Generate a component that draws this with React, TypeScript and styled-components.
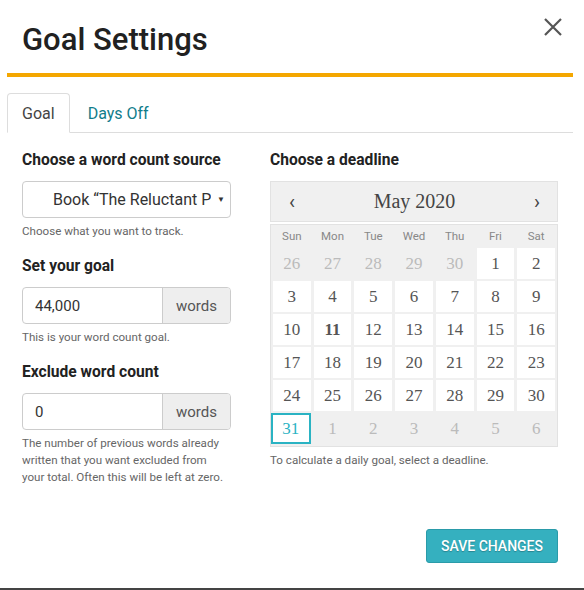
import React from "react";
import styled, { createGlobalStyle, css } from "styled-components";

const GlobalStyle = createGlobalStyle`
  * { box-sizing: border-box; }
  html, body { margin: 0; padding: 0; background: #fff; }
  body { font-family: Roboto, "Liberation Sans", Arial, sans-serif; color: #222; }
`;

const Modal = styled.div`
  width: 584px;
  height: 590px;
  padding: 0 11px 0 7px;
  border-bottom: 2px solid #444;
  display: flex;
  flex-direction: column;
`;

const Header = styled.div`
  height: 77px;
  padding: 0 0 0 15px;
  display: flex;
  align-items: flex-start;
  justify-content: space-between;
  border-bottom: 4px solid #f4a700;
`;

const Title = styled.h1`
  margin: 22px 0 0;
  font-size: 31px;
  font-weight: 500;
  line-height: 36px;
  color: #212121;
`;

const Close = styled.button`
  margin: 13px 6px 0 0;
  width: 28px;
  height: 28px;
  padding: 0;
  border: 0;
  background: none;
  cursor: pointer;
  display: flex;
  align-items: center;
  justify-content: center;
`;

const Tabs = styled.div`
  margin-top: 16px;
  display: flex;
  border-bottom: 1px solid #ddd;
`;

const Tab = styled.div<{ $active?: boolean }>`
  height: 40px;
  padding: 0 14px;
  display: flex;
  align-items: center;
  font-size: 16px;
  margin-bottom: -1px;
  border: 1px solid transparent;
  border-radius: 4px 4px 0 0;
  ${({ $active }) =>
    $active
      ? css`
          color: #444;
          border-color: #ddd;
          border-bottom-color: #fff;
          background: #fff;
        `
      : css`
          color: #117d8b;
          padding: 0 18px 0 17px;
        `}
`;

const Pane = styled.div`
  flex: 1;
  padding: 18px 15px 0;
  display: flex;
  flex-direction: column;
`;

const Columns = styled.div`
  display: flex;
  gap: 39px;
`;

const LeftCol = styled.div`
  width: 209px;
  display: flex;
  flex-direction: column;
`;

const RightCol = styled.div`
  width: 288px;
  display: flex;
  flex-direction: column;
`;

const Label = styled.div<{ $top?: number }>`
  font-size: 15.6px;
  font-weight: 700;
  line-height: 18px;
  color: #222;
  margin-top: ${({ $top }) => $top ?? 0}px;
  margin-bottom: 12px;
`;

const SelectBox = styled.div`
  height: 37px;
  border: 1px solid #ccc;
  border-radius: 4px;
  display: flex;
  align-items: center;
  padding: 0 5px 0 30px;
  font-size: 16px;
  color: #333;
`;

const SelectText = styled.span`
  flex: 1;
  white-space: nowrap;
  overflow: hidden;
`;

const Caret = styled.span`
  font-size: 8px;
  color: #333;
  margin-left: 6px;
`;

const Help = styled.div`
  margin-top: 5px;
  font-size: 11.6px;
  line-height: 17px;
  color: #666;
`;

const InputGroup = styled.div`
  height: 37px;
  display: flex;
  border: 1px solid #ccc;
  border-radius: 4px;
  overflow: hidden;
`;

const Input = styled.div`
  flex: 1;
  display: flex;
  align-items: center;
  padding: 0 12px;
  font-size: 15px;
  color: #333;
`;

const Addon = styled.div`
  width: 68px;
  display: flex;
  align-items: center;
  justify-content: center;
  background: #eee;
  border-left: 1px solid #ccc;
  font-size: 15px;
  color: #555;
`;

const Calendar = styled.div`
  display: flex;
  flex-direction: column;
  gap: 2px;
  font-family: "Liberation Serif", "Times New Roman", serif;
`;

const CalHeader = styled.div`
  height: 41px;
  border: 1px solid #e2e2e2;
  background: #f0f0f0;
  display: flex;
  align-items: center;
  justify-content: space-between;
  padding: 0 17px 0 18px;
`;

const Month = styled.div`
  font-size: 20px;
  color: #444;
`;

const Arrow = styled.span`
  font-family: Roboto, "Liberation Sans", sans-serif;
  font-size: 20px;
  font-weight: 400;
  color: #444;
  line-height: 1;
`;

const CalBody = styled.div`
  border: 1px solid #e2e2e2;
  background: #f0f0f0;
  padding: 0 2px 2px;
`;

const Grid = styled.div`
  display: grid;
  grid-template-columns: repeat(7, 1fr);
  column-gap: 3px;
  row-gap: 2px;
`;

const Weekday = styled.div`
  height: 21px;
  display: flex;
  align-items: center;
  justify-content: center;
  font-family: Roboto, "Liberation Sans", sans-serif;
  font-size: 11.5px;
  color: #888;
`;

const Day = styled.div<{ $muted?: boolean; $today?: boolean; $selected?: boolean }>`
  height: 31px;
  display: flex;
  align-items: center;
  justify-content: center;
  font-size: 17px;
  color: #555;
  background: #fff;
  ${({ $muted }) =>
    $muted &&
    css`
      background: transparent;
      color: #bbb;
    `}
  ${({ $today }) =>
    $today &&
    css`
      font-weight: 700;
    `}
  ${({ $selected }) =>
    $selected &&
    css`
      margin-left: -2px;
      color: #2ab3c3;
      border: 2px solid #2ab3c3;
      background: #fff;
    `}
`;

const Footer = styled.div`
  margin-top: auto;
  margin-bottom: 25px;
  display: flex;
  justify-content: flex-end;
`;

const SaveButton = styled.button`
  height: 34px;
  padding: 0 14px;
  border: 1px solid #2a9ba9;
  border-radius: 3px;
  background: #35b0bf;
  color: #fff;
  font-family: Roboto, "Liberation Sans", sans-serif;
  font-size: 14px;
  font-weight: 500;
  text-shadow: 0 1px 1px rgba(0, 0, 0, 0.25);
  cursor: pointer;
`;

const weekdays = ["Sun", "Mon", "Tue", "Wed", "Thu", "Fri", "Sat"];

type Cell = { n: number; muted?: boolean; today?: boolean; selected?: boolean };

const cells: Cell[] = [
  ...[26, 27, 28, 29, 30].map((n) => ({ n, muted: true })),
  ...Array.from({ length: 31 }, (_, i) => ({
    n: i + 1,
    today: i + 1 === 11,
    selected: i + 1 === 31,
  })),
  ...[1, 2, 3, 4, 5, 6].map((n) => ({ n, muted: true })),
];

export default function App() {
  return (
    <>
      <GlobalStyle />
      <Modal>
        <Header>
          <Title>Goal Settings</Title>
          <Close aria-label="Close">
            <svg width="20" height="20" viewBox="0 0 20 20">
              <path d="M2 2 L18 18 M18 2 L2 18" stroke="#555" strokeWidth="2.2" />
            </svg>
          </Close>
        </Header>

        <Tabs>
          <Tab $active>Goal</Tab>
          <Tab>Days Off</Tab>
        </Tabs>

        <Pane>
          <Columns>
            <LeftCol>
              <Label>Choose a word count source</Label>
              <SelectBox>
                <SelectText>Book “The Reluctant P</SelectText>
                <Caret>▼</Caret>
              </SelectBox>
              <Help>Choose what you want to track.</Help>

              <Label $top={17}>Set your goal</Label>
              <InputGroup>
                <Input>44,000</Input>
                <Addon>words</Addon>
              </InputGroup>
              <Help>This is your word count goal.</Help>

              <Label $top={17}>Exclude word count</Label>
              <InputGroup>
                <Input>0</Input>
                <Addon>words</Addon>
              </InputGroup>
              <Help>
                The number of previous words already written that you want
                excluded from your total. Often this will be left at zero.
              </Help>
            </LeftCol>

            <RightCol>
              <Label>Choose a deadline</Label>
              <Calendar>
                <CalHeader>
                  <Arrow>‹</Arrow>
                  <Month>May 2020</Month>
                  <Arrow>›</Arrow>
                </CalHeader>
                <CalBody>
                  <Grid>
                    {weekdays.map((w) => (
                      <Weekday key={w}>{w}</Weekday>
                    ))}
                    {cells.map((c, i) => (
                      <Day
                        key={i}
                        $muted={c.muted}
                        $today={c.today}
                        $selected={c.selected}
                      >
                        {c.n}
                      </Day>
                    ))}
                  </Grid>
                </CalBody>
              </Calendar>
              <Help>To calculate a daily goal, select a deadline.</Help>
            </RightCol>
          </Columns>

          <Footer>
            <SaveButton>SAVE CHANGES</SaveButton>
          </Footer>
        </Pane>
      </Modal>
    </>
  );
}
